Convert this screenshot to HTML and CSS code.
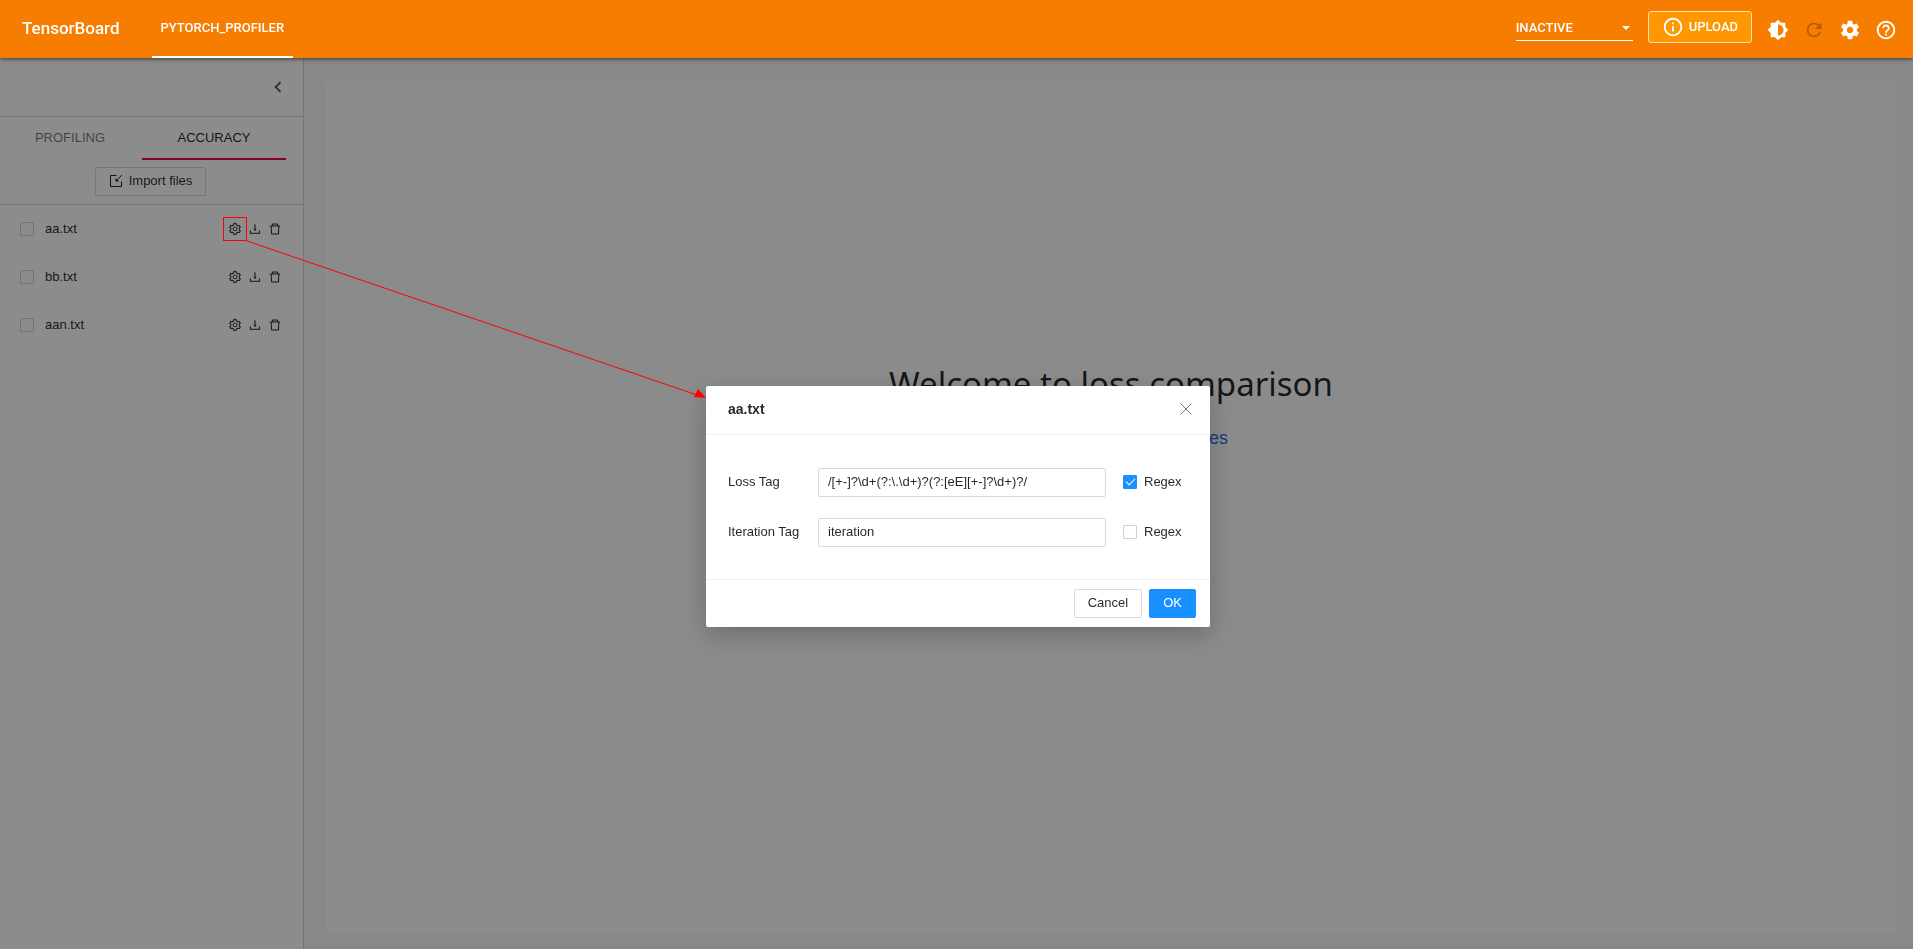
FILE: index.html
```
<!DOCTYPE html>
<html lang="en">
<head>
<meta charset="utf-8">
<title>TensorBoard</title>
<link rel="stylesheet" href="styles.css">
</head>
<body>
<svg class="sprite" aria-hidden="true">
  <symbol id="gear" viewBox="0 0 1024 1024"><path d="M924.8 625.7l-65.5-56c3.1-19 4.7-38.4 4.7-57.8s-1.6-38.8-4.7-57.8l65.5-56a32.03 32.03 0 009.3-35.2l-.9-2.6a443.74 443.74 0 00-79.7-137.9l-1.8-2.1a32.12 32.12 0 00-35.1-9.5l-81.3 28.9c-30-24.6-63.5-44-99.7-57.6l-15.7-85a32.05 32.05 0 00-25.8-25.7l-2.7-.5c-52.1-9.4-106.9-9.4-159 0l-2.7.5a32.05 32.05 0 00-25.8 25.7l-15.8 85.4a351.86 351.86 0 00-99 57.4l-81.9-29.1a32 32 0 00-35.1 9.5l-1.8 2.1a446.02 446.02 0 00-79.7 137.9l-.9 2.6c-4.5 12.5-.8 26.5 9.3 35.2l66.3 56.6c-3.1 18.8-4.6 38-4.6 57.1 0 19.2 1.5 38.4 4.6 57.1L99 625.5a32.03 32.03 0 00-9.3 35.2l.9 2.6c18.1 50.4 44.9 96.9 79.7 137.9l1.8 2.1a32.12 32.12 0 0035.1 9.5l81.9-29.1c29.8 24.5 63.1 43.9 99 57.4l15.8 85.4a32.05 32.05 0 0025.8 25.7l2.7.5a449.4 449.4 0 00159 0l2.7-.5a32.05 32.05 0 0025.8-25.7l15.7-85a350 350 0 0099.7-57.6l81.3 28.9a32 32 0 0035.1-9.5l1.8-2.1c34.8-41.1 61.6-87.5 79.7-137.9l.9-2.6c4.5-12.3.8-26.3-9.3-35zM788.3 465.9c2.5 15.1 3.8 30.6 3.8 46.1s-1.3 31-3.8 46.1l-6.6 40.1 74.7 63.9a370.03 370.03 0 01-42.6 73.6L721 702.8l-31.4 25.8c-23.9 19.6-50.5 35-79.3 45.8l-38.1 14.3-17.9 97a377.5 377.5 0 01-85 0l-17.9-97.2-37.8-14.5c-28.5-10.8-55-26.2-78.7-45.7l-31.4-25.9-93.4 33.2c-17-22.9-31.2-47.6-42.6-73.6l75.5-64.5-6.5-40c-2.4-14.9-3.7-30.3-3.7-45.5 0-15.3 1.2-30.6 3.7-45.5l6.5-40-75.5-64.5c11.3-26.1 25.6-50.7 42.6-73.6l93.4 33.2 31.4-25.9c23.7-19.5 50.2-34.9 78.7-45.7l37.9-14.3 17.9-97.2c28.1-3.2 56.8-3.2 85 0l17.9 97 38.1 14.3c28.7 10.8 55.4 26.2 79.3 45.8l31.4 25.8 92.8-32.9c17 22.9 31.2 47.6 42.6 73.6L781.8 426l6.5 39.9zM512 326c-97.2 0-176 78.8-176 176s78.8 176 176 176 176-78.8 176-176-78.8-176-176-176zm79.2 255.2A111.6 111.6 0 01512 614c-29.9 0-58-11.7-79.2-32.8A111.6 111.6 0 01400 502c0-29.9 11.7-58 32.8-79.2C454 401.6 482.1 390 512 390c29.9 0 58 11.6 79.2 32.8A111.6 111.6 0 01624 502c0 29.9-11.7 58-32.8 79.2z"/></symbol>
  <symbol id="download" viewBox="0 0 1024 1024"><path d="M505.7 661a8 8 0 0012.6 0l112-141.7c4.1-5.2.4-12.9-6.3-12.9h-74.1V168c0-4.4-3.6-8-8-8h-60c-4.4 0-8 3.6-8 8v338.3H400c-6.7 0-10.4 7.7-6.3 12.9l112 141.8zM878 626h-60c-4.4 0-8 3.6-8 8v154H214V634c0-4.4-3.6-8-8-8h-60c-4.4 0-8 3.6-8 8v198c0 17.7 14.3 32 32 32h684c17.7 0 32-14.3 32-32V634c0-4.4-3.6-8-8-8z"/></symbol>
  <symbol id="trash" viewBox="0 0 1024 1024"><path d="M360 184h-8c4.4 0 8-3.6 8-8v8h304v-8c0 4.4 3.6 8 8 8h-8v72h72v-80c0-35.3-28.7-64-64-64H352c-35.3 0-64 28.7-64 64v80h72v-72zm504 72H160c-17.7 0-32 14.3-32 32v32c0 4.4 3.6 8 8 8h60.4l24.7 523c1.6 34.1 29.8 61 63.9 61h454c34.2 0 62.3-26.8 63.9-61l24.7-523H888c4.4 0 8-3.6 8-8v-32c0-17.7-14.3-32-32-32zM731.3 840H292.7l-24.2-512h487l-24.2 512z"/></symbol>
</svg>

<header class="topbar">
  <h1 class="brand">TensorBoard</h1>
  <nav class="plugins"><a class="plugin" href="#profiler">PYTORCH_PROFILER</a></nav>
  <div class="tools">
    <div class="inactive">
      <select class="inactive-select" aria-label="Inactive plugins"><option>INACTIVE</option></select>
      <svg class="caret" viewBox="0 0 8 4" aria-hidden="true"><path d="M0 0h8L4 4z"/></svg>
    </div>
    <button class="upload" type="button">
      <svg class="icon" viewBox="0 0 24 24" aria-hidden="true"><path d="M11 7h2v2h-2zm0 4h2v6h-2zm1-9C6.48 2 2 6.48 2 12s4.480 10 10 10 10-4.480 10-10S17.520 2 12 2zm0 18c-4.410 0-8-3.590-8-8s3.590-8 8-8 8 3.590 8 8-3.590 8-8 8z"/></svg>
      <span>UPLOAD</span>
    </button>
    <button class="tool" type="button" aria-label="Theme"><svg class="icon" viewBox="0 0 24 24"><path d="M20 15.310L23.310 12 20 8.690V4h-4.690L12 .690 8.690 4H4v4.690L.690 12 4 15.310V20h4.690L12 23.310 15.310 20H20v-4.690zM12 18V6c3.310 0 6 2.690 6 6s-2.690 6-6 6z"/></svg></button>
    <button class="tool" type="button" aria-label="Reload" disabled><svg class="icon" viewBox="0 0 24 24"><path d="M17.650 6.350C16.200 4.900 14.210 4 12 4c-4.420 0-7.990 3.580-7.990 8s3.570 8 7.990 8c3.730 0 6.840-2.550 7.730-6h-2.080c-.820 2.330-3.040 4-5.650 4-3.310 0-6-2.690-6-6s2.690-6 6-6c1.660 0 3.140.690 4.220 1.780L13 11h7V4l-2.350 2.350z"/></svg></button>
    <button class="tool" type="button" aria-label="Settings"><svg class="icon" viewBox="0 0 24 24"><path d="M19.430 12.980c.040-.320.070-.640.070-.980s-.030-.660-.070-.980l2.110-1.650c.190-.150.240-.420.120-.640l-2-3.460c-.120-.220-.390-.300-.610-.220l-2.490 1c-.520-.400-1.080-.730-1.690-.980l-.380-2.650C14.460 2.180 14.250 2 14 2h-4c-.250 0-.460.180-.490.420l-.380 2.650c-.610.250-1.170.590-1.690.980l-2.490-1c-.230-.090-.490 0-.610.220l-2 3.460c-.130.220-.070.490.120.640l2.110 1.650c-.040.320-.070.650-.070.980s.030.660.070.980l-2.110 1.650c-.190.150-.240.420-.120.640l2 3.460c.120.220.390.300.610.220l2.490-1c.520.400 1.080.730 1.690.980l.380 2.650c.030.240.240.420.490.420h4c.250 0 .460-.180.490-.420l.380-2.650c.610-.250 1.170-.590 1.690-.980l2.490 1c.230.090.490 0 .610-.220l2-3.460c.120-.220.070-.490-.120-.640l-2.110-1.650zM12 15.500c-1.930 0-3.500-1.570-3.500-3.500s1.570-3.500 3.500-3.500 3.500 1.570 3.500 3.500-1.570 3.500-3.500 3.500z"/></svg></button>
    <button class="tool" type="button" aria-label="Help"><svg class="icon" viewBox="0 0 24 24"><path d="M11 18h2v-2h-2v2zm1-16C6.480 2 2 6.480 2 12s4.480 10 10 10 10-4.480 10-10S17.520 2 12 2zm0 18c-4.410 0-8-3.590-8-8s3.590-8 8-8 8 3.590 8 8-3.590 8-8 8zm0-14c-2.210 0-4 1.790-4 4h2c0-1.100.900-2 2-2s2 .900 2 2c0 2-3 1.750-3 5h2c0-2.250 3-2.500 3-5 0-2.210-1.790-4-4-4z"/></svg></button>
  </div>
</header>

<div class="page">
  <aside class="sidebar">
    <div class="collapse-row">
      <button class="collapse" type="button" aria-label="Collapse"><svg class="icon" viewBox="0 0 24 24"><path d="M15.410 7.410L14 6l-6 6 6 6 1.410-1.410L10.830 12z"/></svg></button>
    </div>
    <div class="tabs">
      <button class="tab" type="button">PROFILING</button>
      <button class="tab selected" type="button">ACCURACY</button>
    </div>
    <div class="import-row">
      <button class="btn import" type="button">
        <svg class="small-icon" viewBox="0 0 14 14" aria-hidden="true"><path class="line" d="M7.500 1.500h-6v11h11V7.500M13 1L7.500 6.500"/><path d="M6.500 4l3.500 3.500H6.500z"/></svg>
        <span>Import files</span>
      </button>
    </div>
    <ul class="files">
      <li class="file">
        <label class="file-label"><input class="check" type="checkbox">aa.txt</label>
        <span class="actions">
          <button class="action" type="button" aria-label="Configure aa.txt"><svg class="small-icon"><use href="#gear"/></svg></button>
          <button class="action" type="button" aria-label="Download aa.txt"><svg class="small-icon"><use href="#download"/></svg></button>
          <button class="action" type="button" aria-label="Delete aa.txt"><svg class="small-icon"><use href="#trash"/></svg></button>
        </span>
      </li>
      <li class="file">
        <label class="file-label"><input class="check" type="checkbox">bb.txt</label>
        <span class="actions">
          <button class="action" type="button" aria-label="Configure bb.txt"><svg class="small-icon"><use href="#gear"/></svg></button>
          <button class="action" type="button" aria-label="Download bb.txt"><svg class="small-icon"><use href="#download"/></svg></button>
          <button class="action" type="button" aria-label="Delete bb.txt"><svg class="small-icon"><use href="#trash"/></svg></button>
        </span>
      </li>
      <li class="file">
        <label class="file-label"><input class="check" type="checkbox">aan.txt</label>
        <span class="actions">
          <button class="action" type="button" aria-label="Configure aan.txt"><svg class="small-icon"><use href="#gear"/></svg></button>
          <button class="action" type="button" aria-label="Download aan.txt"><svg class="small-icon"><use href="#download"/></svg></button>
          <button class="action" type="button" aria-label="Delete aan.txt"><svg class="small-icon"><use href="#trash"/></svg></button>
        </span>
      </li>
    </ul>
  </aside>
  <main class="main">
    <section class="card">
      <h2 class="welcome">Welcome to loss comparison</h2>
      <p class="hint">Select left files or <a class="link" href="#import">Import files</a></p>
    </section>
  </main>
</div>

<div class="mask">
  <form class="modal" role="dialog" aria-labelledby="modal-title">
    <div class="modal-head">
      <h3 class="modal-title" id="modal-title">aa.txt</h3>
      <button class="close" type="button" aria-label="Close"><svg class="close-icon" viewBox="0 0 12 12"><path class="line" d="M.5.5l11 11M11.500.5l-11 11"/></svg></button>
    </div>
    <div class="modal-body">
      <div class="field">
        <label class="field-label" for="loss">Loss Tag</label>
        <input class="text" id="loss" type="text" value="/[+-]?\d+(?:\.\d+)?(?:[eE][+-]?\d+)?/">
        <label class="regex"><input class="check" type="checkbox" checked>Regex</label>
      </div>
      <div class="field">
        <label class="field-label" for="iter">Iteration Tag</label>
        <input class="text" id="iter" type="text" value="iteration">
        <label class="regex"><input class="check" type="checkbox">Regex</label>
      </div>
    </div>
    <div class="modal-foot">
      <button class="btn" type="button">Cancel</button>
      <button class="btn primary" type="button">OK</button>
    </div>
  </form>
</div>

<svg class="pointer" viewBox="0 0 484 182" aria-hidden="true">
  <rect class="pointer-line" x=".5" y=".5" width="23" height="23"/>
  <path class="pointer-line" d="M24 24L474 178"/>
  <path class="pointer-head" d="M483 181l-8-9-4 8z"/>
</svg>
</body>
</html>
```
FILE: styles.css
```
* {
  box-sizing: border-box;
}

html,
body {
  height: 100%;
}

body {
  margin: 0;
  display: flex;
  flex-direction: column;
  overflow: hidden;
  background: #f7f7f7;
  color: rgba(0, 0, 0, 0.85);
  font: 13px/20px "Liberation Sans", Arial, sans-serif;
}

button,
input,
select {
  font: inherit;
  color: inherit;
  margin: 0;
}

button {
  padding: 0;
  border: 0;
  background: none;
}

.sprite {
  display: none;
}

.icon {
  display: block;
  width: 22px;
  height: 22px;
  fill: currentColor;
}

.small-icon {
  display: block;
  width: 14px;
  height: 14px;
  fill: currentColor;
}

.line {
  fill: none;
  stroke: currentColor;
}

/* Top bar */
.topbar {
  position: relative;
  z-index: 3;
  display: flex;
  flex: none;
  align-items: center;
  height: 58px;
  padding: 0 9px 0 22px;
  background: #f77d00;
  color: #fff;
  box-shadow: 0 1px 4px rgba(0, 0, 0, 0.6);
  font-family: Roboto, sans-serif;
}

.brand {
  margin: 0;
  padding-bottom: 2px;
  font-size: 17px;
  font-weight: 500;
}

.plugins {
  align-self: stretch;
  display: flex;
  margin-left: 32px;
}

.plugin {
  display: flex;
  align-items: center;
  padding: 0 9px;
  border-bottom: 2px solid #fff;
  color: inherit;
  font-weight: 500;
  text-decoration: none;
}

.tools {
  display: flex;
  align-items: center;
  margin-left: auto;
}

.inactive {
  position: relative;
  width: 117px;
  margin: 0 15px 2px 0;
}

.inactive-select {
  display: block;
  appearance: none;
  width: 100%;
  height: 26px;
  padding: 0;
  border: 0;
  border-bottom: 1px solid #fff;
  border-radius: 0;
  background: none;
  font-weight: 500;
}

.caret {
  position: absolute;
  top: 11px;
  right: 3px;
  width: 8px;
  height: 4px;
  fill: #fff;
}

.upload {
  display: flex;
  align-items: center;
  gap: 5px;
  height: 32px;
  margin: 0 8px 4px 0;
  padding: 0 13px;
  border: 1px solid #ffe0b2;
  border-radius: 3px;
  background: #ff9800;
  font-weight: 500;
}

.tool {
  padding: 9px 7px 7px;
}

.tool:disabled {
  color: rgba(0, 0, 0, 0.26);
}

/* Page */
.page {
  display: flex;
  flex: 1;
  min-height: 0;
}

.sidebar {
  flex: none;
  width: 304px;
  border-right: 1px solid #d6d6dc;
  background: #fff;
}

.collapse-row {
  display: flex;
  align-items: center;
  justify-content: flex-end;
  height: 59px;
  padding-right: 14px;
  border-bottom: 1px solid #d6d6dc;
}

.collapse {
  color: #555;
}

.tabs {
  display: flex;
  margin-left: -2px;
  padding-right: 17px;
}

.tab {
  flex: 1;
  height: 43px;
  border-bottom: 2px solid transparent;
  color: rgba(0, 0, 0, 0.54);
}

.selected {
  border-color: #f50057;
  color: rgba(0, 0, 0, 0.87);
}

.import-row {
  display: flex;
  justify-content: center;
  padding: 7px 2px 8px 0;
  border-bottom: 1px solid #d6d6dc;
}

.btn {
  display: flex;
  align-items: center;
  gap: 6px;
  height: 29px;
  padding: 0 13px 2px;
  border: 1px solid #d9d9d9;
  border-radius: 2px;
  background: #fff;
}

.primary {
  border-color: #1890ff;
  background: #1890ff;
  color: #fff;
}

.files {
  margin: 0;
  padding: 0;
  list-style: none;
}

.file {
  display: flex;
  align-items: center;
  justify-content: space-between;
  height: 48px;
  padding: 0 21px 0 20px;
}

.file-label,
.regex {
  display: flex;
  align-items: center;
}

.file-label {
  gap: 11px;
}

.check {
  appearance: none;
  display: grid;
  place-items: center;
  width: 14px;
  height: 14px;
  border: 1px solid #d0d0d0;
  border-radius: 1px;
  background: #fff;
}

.check:checked {
  border-color: #1890ff;
  background: #1890ff;
}

.check:checked::before {
  content: "";
  width: 4px;
  height: 8px;
  margin-bottom: 2px;
  border: solid #fff;
  border-width: 0 1px 1px 0;
  transform: rotate(45deg);
}

.actions {
  display: flex;
  gap: 6px;
}

.main {
  flex: 1;
  display: flex;
  padding: 22px 17px 15px 22px;
}

.card {
  flex: 1;
  padding-top: 280px;
  border-radius: 4px;
  background: #fefefe;
  text-align: center;
}

.welcome {
  margin: 0 0 20px;
  font: 400 33px/48px "Noto Sans", sans-serif;
}

.hint {
  margin: 0;
  padding-left: 4px;
  font-size: 18px;
  line-height: 20px;
}

.link {
  color: #2468f2;
  text-decoration: none;
}

/* Dialog */
.mask {
  position: fixed;
  inset: 0;
  z-index: 2;
  padding: 386px 0 0 3px;
  background: rgba(0, 0, 0, 0.45);
}

.modal {
  width: 504px;
  margin: 0 auto;
  border-radius: 2px;
  background: #fff;
  box-shadow: 0 8px 26px rgba(0, 0, 0, 0.24);
}

.modal-head {
  display: flex;
  align-items: center;
  justify-content: space-between;
  height: 49px;
  padding: 0 18px 2px 22px;
  border-bottom: 1px solid #f0f0f0;
}

.modal-title {
  margin: 0;
  font-size: 14px;
}

.close {
  color: #777;
}

.close-icon {
  display: block;
  width: 12px;
  height: 12px;
}

.modal-body {
  display: flex;
  flex-direction: column;
  gap: 21px;
  padding: 33px 22px 32px;
}

.field {
  display: flex;
  align-items: center;
}

.field-label {
  width: 90px;
  padding-bottom: 2px;
}

.text {
  flex: 1;
  min-width: 0;
  height: 29px;
  padding: 0 9px 2px;
  border: 1px solid #d9d9d9;
  border-radius: 2px;
}

.regex {
  gap: 7px;
  width: 82px;
  padding: 0 0 2px 17px;
}

.modal-foot {
  display: flex;
  justify-content: flex-end;
  gap: 7px;
  padding: 9px 14px;
  border-top: 1px solid #f0f0f0;
}

/* Callout from the gear to the dialog */
.pointer {
  position: absolute;
  z-index: 4;
  top: 217px;
  left: 223px;
  width: 484px;
  height: 182px;
  pointer-events: none;
}

.pointer-line {
  fill: none;
  stroke: #f00;
}

.pointer-head {
  fill: #f00;
}
```
